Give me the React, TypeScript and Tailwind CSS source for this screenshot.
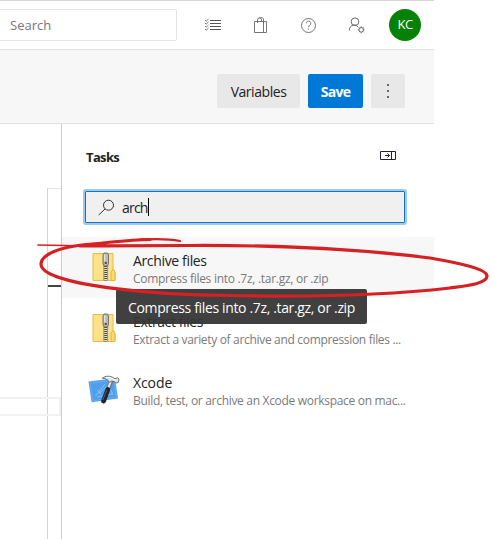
import React from 'react';

function ZipFolder() {
  return (
    <svg width="24" height="30" viewBox="0 0 24 30" fill="none">
      <path d="M1 1.5H21V17L23 20.5V28.5H1Z" fill="#ffdf7c" stroke="#e5bd4b" />
      <path d="M2.5 3H19V27H2.5Z" fill="#fde28a" />
      <path d="M19 28.5V20L21 17.5L23 20V28.5Z" fill="#ffdc6d" stroke="#e2b53c" />
      <path d="M11 11H16.4V28.5H11Z" fill="#e9dfbd" />
      <path d="M13.7 14V28.5" stroke="#4b4b46" strokeWidth="3" strokeDasharray="1 1" />
      <path d="M11.8 14V28.5M15.6 14V28.5" stroke="#777466" strokeWidth=".7" />
      <path d="M12 1H15.5L16.5 3V11.5L15.5 14H12L11 11.5V3Z" fill="#b9b9b9" stroke="#5c5c5c" strokeWidth=".8" />
      <path d="M12.7 2.5V9" stroke="#efefef" />
      <path d="M12.8 11H14.8" stroke="#333" strokeWidth="1.6" />
    </svg>
  );
}

function Xcode() {
  return (
    <svg width="32" height="31" viewBox="0 0 32 31" fill="none">
      <path d="M.5 7.5L27 4.3L30 24.5L3.6 28.3Z" fill="#519feb" />
      <path d="M2 9L26 6L28.5 23.3L4.8 26.8Z" stroke="#6bb0f2" strokeWidth=".8" />
      <path d="M7.5 22L17 10M9 23L24 20M11 19.5L18 13M9.5 16L13 20M22 14L25 21" stroke="#93c8f8" strokeWidth=".8" />
      <path d="M23.5 6L20.3 15" stroke="#6d7379" strokeWidth="3.8" />
      <path d="M23.2 6L20 15" stroke="#e6e8ea" strokeWidth="2" />
      <path d="M19.8 15.5L15.6 27" stroke="#20252b" strokeWidth="4.8" strokeLinecap="round" />
      <path d="M18.7 16L14.8 26" stroke="#59616a" />
      <path d="M14.3 4.2C16.5 2 21 1.6 24 3L27 4.8L29.5 3.7L31 5.2L30.2 8.6L28.5 9L26 7.6L23.8 7.2L21.4 8.2L19.8 6.2Q17.5 4.2 14.3 4.2Z" fill="#dfe2e4" stroke="#4f565d" strokeWidth=".8" />
      <path d="M18 3.5Q22 2.8 24 4.6L28 6.2" stroke="#fff" />
    </svg>
  );
}

function TaskRow({ icon, title, detail, titleClass, detailClass, rowClass }: {
  icon: React.ReactNode; title: string; detail: string; titleClass: string; detailClass: string; rowClass: string;
}) {
  return (
    <div className={`flex h-[61px] ${rowClass}`}>
      <div className="flex w-[71px] shrink-0 justify-center pt-[15px] pl-[12px]">{icon}</div>
      <div className="pt-[13px] whitespace-nowrap">
        <div className={`h-[20px] text-[14px] leading-[21px] text-[#222] ${titleClass}`}>{title}</div>
        <div className={`h-[16px] text-[12px] leading-[17px] text-[#7a7a7a] ${detailClass}`}>{detail}</div>
      </div>
    </div>
  );
}

export default function App() {
  return (
    <div className="relative h-[539px] w-[492px] overflow-hidden bg-white font-['Open_Sans','Noto_Sans',sans-serif]">
      <div className="flex h-[539px] w-[434px] flex-col">
        <header className="flex h-[50px] shrink-0 items-center border-t border-b border-t-[#d6d6d6] border-b-[#e2e2e2]">
          <div className="flex h-[32px] w-[177px] items-center rounded-r-[2px] border border-l-0 border-[#e4e4e4] pt-[2px] pl-[10px] text-[13px] text-[#777]">Search</div>
          <div className="flex items-center pl-[28px]">
            <svg width="17" height="16" viewBox="0 0 17 16" fill="none" stroke="#555">
              <path d="M5 3.5H16M5 6.5H16M5 9.5H16M5 12.5H16" />
              <path d="M0 3L1.2 4.2L3.5 2M0 6L1.2 7.2L3.5 5M0 9L1.2 10.2L3.5 8M0 12L1.2 13.2L3.5 11" strokeWidth=".8" />
            </svg>
            <svg className="ml-[31px]" width="16" height="17" viewBox="0 0 16 17" fill="none" stroke="#666">
              <path d="M1.5 4.5H13.5V15.5H1.5ZM10.5 4.5V15.5M4.5 6V3Q4.5.8 6.5.8T8.5 3V4.5M6.5 1Q10.5-.5 10.5 3V6" strokeWidth=".9" />
            </svg>
            <svg className="ml-[31px]" width="17" height="17" viewBox="0 0 17 17" fill="none" stroke="#666">
              <circle cx="8.5" cy="8.5" r="7" strokeWidth=".9" />
              <path d="M6.3 6.3C6.3 3.4 10.8 3.4 10.8 6.3C10.8 8.2 8.5 8.1 8.5 10.2M8.5 11.6V12.7" strokeWidth=".9" />
            </svg>
            <svg className="ml-[31px]" width="18" height="17" viewBox="0 0 18 17" fill="none" stroke="#666">
              <circle cx="7" cy="4.7" r="3.8" />
              <path d="M1.3 13.5C1.3 7.3 8.2 6.7 10 10" />
              <circle cx="13.2" cy="12.8" r="2.3" />
              <path d="M13.2 9.4V10.5M13.2 15.1V16.3M9.8 12.8H10.9M15.5 12.8H16.7M10.8 10.4L11.6 11.2M14.8 14.4L15.6 15.2M15.6 10.4L14.8 11.2M11.6 14.4L10.8 15.2" strokeWidth=".9" />
            </svg>
            <div className="ml-[23px] flex h-[32px] w-[32px] items-center justify-center rounded-full bg-[#058205] text-[13px] tracking-[-0.5px] text-white">KC</div>
          </div>
        </header>

        <div className="flex h-[74px] shrink-0 items-center justify-end gap-[8px] border-b border-[#e2e2e2] bg-[#f7f7f7] pt-[8px] pr-[29px]">
          <button className="h-[34px] w-[83px] rounded-[2px] bg-[#e8e8e8] pt-[2px] text-[14px] tracking-[-0.45px] text-[#222]">Variables</button>
          <button className="h-[34px] w-[55px] rounded-[2px] bg-[#0078d7] pt-[2px] text-[14px] font-bold tracking-[-0.75px] text-white">Save</button>
          <button className="flex h-[34px] w-[34px] flex-col items-center justify-center gap-[4px] rounded-[2px] bg-[#e8e8e8]">
            <span className="h-[2px] w-[2px] bg-[#666]" /><span className="h-[2px] w-[2px] bg-[#666]" /><span className="h-[2px] w-[2px] bg-[#666]" />
          </button>
        </div>

        <div className="flex min-h-0 flex-1">
          <div className="relative w-[61px] shrink-0 pt-[64px] pl-[47px]">
            <div className="h-full border-t border-l border-t-[#e4e4e4] border-l-[#d4d4d4] pt-[96px]">
              <div className="h-[2px] bg-[#444]" />
            </div>
            <div className="absolute top-[273px] left-0 h-[19px] w-[61px] border-2 border-l-0 border-[#f1f1f1]" />
          </div>
          <aside className="flex flex-1 flex-col border-l border-[#ccc]">
            <div className="flex h-[66px] items-center justify-between pr-[37px] pl-[24px]">
              <h2 className="pt-[2px] text-[13px] font-bold tracking-[-0.65px] text-[#222]">Tasks</h2>
              <svg className="mb-[4px]" width="17" height="11" viewBox="0 0 17 11" fill="none" stroke="#252035">
                <path d="M.5 1.5H15.5V9.5H.5ZM11.5 1.5V9.5M5 5.5H9.5M7.5 3.5L9.5 5.5L7.5 7.5" />
              </svg>
            </div>
            <div className="mt-[-1px] ml-[21px] flex h-[36px] w-[324px] items-center rounded-[3px] border-2 border-[#9bcaf2] bg-[#f0f0f0] pl-[13px] outline outline-[#1673bc] outline-offset-[-3px]">
              <svg width="17" height="17" viewBox="0 0 17 17" fill="none" stroke="#333">
                <circle cx="10.5" cy="6.2" r="5" /><path d="M7 10L.7 16" />
              </svg>
              <span className="ml-[7px] text-[14px] tracking-[-0.8px] text-[#222]">arch</span><span className="h-[18px] w-px bg-black" />
            </div>
            <div className="mt-[12px]">
              <TaskRow icon={<ZipFolder />} title="Archive files" detail="Compress files into .7z, .tar.gz, or .zip" titleClass="tracking-[-0.35px]" detailClass="tracking-[-0.28px]" rowClass="bg-[#f7f7f7]" />
              <TaskRow icon={<ZipFolder />} title="Extract files" detail="Extract a variety of archive and compression files ..." titleClass="tracking-[-0.4px]" detailClass="tracking-[-0.32px]" rowClass="" />
              <TaskRow icon={<Xcode />} title="Xcode" detail="Build, test, or archive an Xcode workspace on mac..." titleClass="tracking-[-0.1px]" detailClass="tracking-[-0.31px]" rowClass="" />
            </div>
          </aside>
        </div>
      </div>
      <div className="absolute top-[289px] left-[116px] flex h-[35px] w-[251px] items-center rounded-[2px] bg-[#363636]/95 pt-px pl-[12px] text-[14px] tracking-[-0.35px] whitespace-nowrap text-white">Compress files into .7z, .tar.gz, or .zip</div>
      <svg className="pointer-events-none absolute top-0 left-0" width="492" height="539" viewBox="0 0 492 539" fill="none" stroke="#d62124" strokeLinecap="round" strokeLinejoin="round">
        <path d="M38 245L90 246" strokeWidth="1.7" />
        <path d="M80 246C115 246 144 245.5 190 245.5C280 245 366 250 430 258C459 263 487 269 487 276C487 284 465 286 450 288C380 296 300 297 230 295.5C160 295 41 286 41 264C41 255 59 247 86 244.5C106 243 130 239.7 150 239.5" strokeWidth="3.2" />
        <path d="M140 239.7C155 238.7 168 238.7 180 241" strokeWidth="2.2" />
      </svg>
    </div>
  );
}
